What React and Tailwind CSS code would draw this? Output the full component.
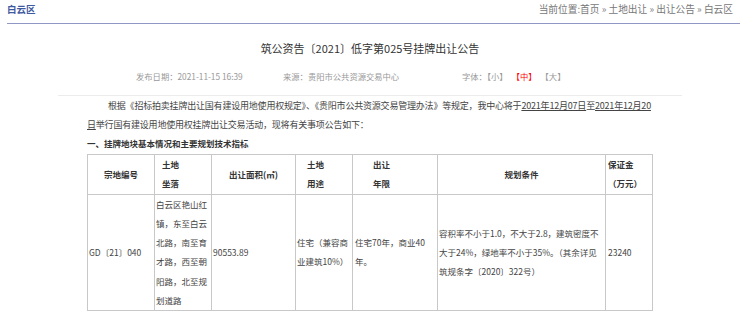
export default function App() {
  return (
    <div className="w-[740px] h-[316px] overflow-hidden bg-white text-[#333] font-['Noto_Sans_CJK_SC','Noto_Sans',sans-serif]">
      {/* top bar */}
      <div className="ml-[7px] flex h-[24px] items-center justify-between border-b border-[#8f97c4] pb-[4px] pr-[7px]">
        <span className="text-[9.5px] font-bold text-[#3f5a9f]">白云区</span>
        <span className="text-[9.7px] text-[#777]">当前位置:首页 » 土地出让 » 出让公告 » 白云区</span>
      </div>

      <h1 className="mt-[16px] text-center text-[11px] leading-[16px] text-[#333]">
        筑公资告〔2021〕低字第025号挂牌出让公告
      </h1>

      <div className="mt-[14px] flex pl-[136px] text-[8.3px] leading-[12px] text-[#999]">
        <span className="w-[147px]">发布日期：2021-11-15 16:39</span>
        <span className="w-[179px]">来源：贵阳市公共资源交易中心</span>
        <span className="flex gap-[4px]">
          <span>字体：【小】</span>
          <span className="text-[#f00]">【中】</span>
          <span>【大】</span>
        </span>
      </div>

      <div className="mx-auto mt-[13px] w-[624px] border-t border-[#ececec]" />

      <div className="ml-[87px] w-[565px]">
        <p className="indent-[21px] whitespace-nowrap text-[9px] leading-[19px] tracking-[-0.2px] text-[#444]">
          根据《招标拍卖挂牌出让国有建设用地使用权规定》、《贵阳市公共资源交易管理办法》等规定，我中心将于
          <u>2021年12月07日</u>至<u>2021年12月20<br />日</u>举行国有建设用地使用权挂牌出让交易活动，现将有关事项公告如下：
        </p>
        <h2 className="text-[8.5px] font-bold leading-[19px] text-[#333]">一、挂牌地块基本情况和主要规划技术指标</h2>

        <table className="mt-[1px] w-[565px] table-fixed border-collapse text-[8.5px] leading-[19.3px] text-[#444]">
          <colgroup>
            <col className="w-[67px]" />
            <col className="w-[57px]" />
            <col className="w-[84px]" />
            <col className="w-[57px]" />
            <col className="w-[85px]" />
            <col className="w-[168px]" />
            <col className="w-[47px]" />
          </colgroup>
          <thead>
            <tr className="font-bold text-[#333]">
              <th className="border border-[#c8c8c8] p-0 text-center font-bold">宗地编号</th>
              <th className="border border-[#c8c8c8] p-0 pl-[7px] text-left font-bold">土地<br />坐落</th>
              <th className="border border-[#c8c8c8] p-0 text-center font-bold">出让面积(㎡)</th>
              <th className="border border-[#c8c8c8] p-0 pl-[11px] text-left font-bold">土地<br />用途</th>
              <th className="border border-[#c8c8c8] p-0 pl-[20px] text-left font-bold">出让<br />年限</th>
              <th className="border border-[#c8c8c8] p-0 text-center font-bold">规划条件</th>
              <th className="border border-[#c8c8c8] p-0 pl-[2px] text-left font-bold whitespace-nowrap">保证金<br />（万元）</th>
            </tr>
          </thead>
          <tbody>
            <tr>
              <td className="border border-[#c8c8c8] p-0 pl-[1px] align-middle whitespace-nowrap">GD〔21〕040</td>
              <td className="border border-[#c8c8c8] p-0 pl-[1px] align-middle whitespace-nowrap">
                白云区艳山红<br />镇，东至白云<br />北路，南至育<br />才路，西至朝<br />阳路，北至规<br />划道路
              </td>
              <td className="border border-[#c8c8c8] p-0 pl-[1px] align-middle">90553.89</td>
              <td className="border border-[#c8c8c8] p-0 pl-[1px] align-middle whitespace-nowrap">
                住宅（兼容商<br />业建筑10%）
              </td>
              <td className="border border-[#c8c8c8] p-0 pl-[2px] align-middle whitespace-nowrap">
                住宅70年，商业40<br />年。
              </td>
              <td className="border border-[#c8c8c8] p-0 pl-[1px] align-middle whitespace-nowrap">
                容积率不小于1.0，不大于2.8，建筑密度不<br />大于24%，绿地率不小于35%。（其余详见<br />筑规条字〔2020〕322号）
              </td>
              <td className="border border-[#c8c8c8] p-0 pl-[2px] align-middle">23240</td>
            </tr>
          </tbody>
        </table>
      </div>
    </div>
  );
}
